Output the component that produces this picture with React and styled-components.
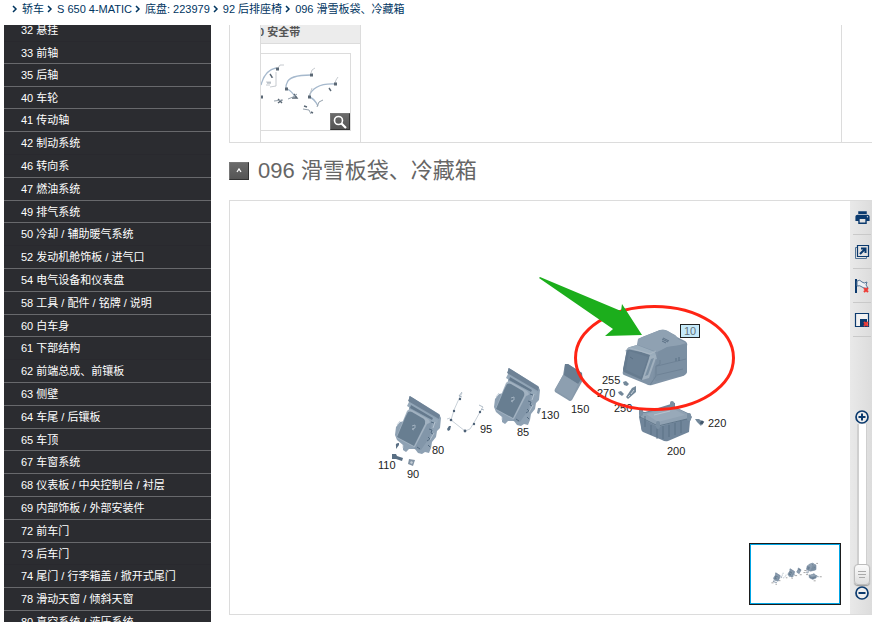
import * as React from 'react'
import styled, { createGlobalStyle } from 'styled-components'
import { MdPrint } from 'react-icons/md'

const GlobalStyle = createGlobalStyle`
  * {
    box-sizing: border-box;
  }

  body {
    margin: 0;
    background: #fff;
    color: #1a1a1a;
    font: 11px/16px "Liberation Sans", "Noto Sans CJK SC", sans-serif;
  }

  button {
    font: inherit;
    padding: 0;
    cursor: pointer;
  }
`

const Page = styled.div`
  display: flex;
  flex-direction: column;
  height: 100vh;
  overflow: hidden;
`

const Breadcrumb = styled.nav`
  flex: none;
  display: flex;
  align-items: center;
  gap: 3px;
  height: 25px;
  padding: 0 12px 8px;
  white-space: nowrap;
`

const Crumb = styled.a`
  display: flex;
  align-items: center;
  gap: 4px;
  color: #00355f;
  text-decoration: none;
`

const Columns = styled.div`
  flex: 1;
  display: flex;
  gap: 18px;
  min-height: 0;
  padding-left: 4px;
`

const Sidebar = styled.nav`
  flex: none;
  width: 207px;
  overflow: hidden;
  background: #2b2c30;
`

const GroupList = styled.ul`
  margin: -6px 0 0;
  padding: 0;
  list-style: none;
`

const GroupItem = styled.li`
  height: 23px;
  border-bottom: 1px solid ${(p) => (p.$plain ? '#29292e' : '#68696c')};

  &:nth-child(2),
  &:nth-child(5n + 4) {
    height: 22px;
  }
`

const GroupLink = styled.a`
  display: block;
  padding-left: 17px;
  color: #fff;
  line-height: 22px;
  text-decoration: none;
  white-space: nowrap;
`

const Main = styled.main`
  flex: 1;
  min-width: 0;
  overflow: hidden;
`

const Strip = styled.div`
  border: solid #dcdcdc;
  border-width: 0 0 1px 1px;
  padding: 0 30px;
`

const StripInner = styled.div`
  border-right: 1px solid #dcdcdc;
`

const Card = styled.section`
  width: 101px;
  overflow: hidden;
  border: solid #dcdcdc;
  border-width: 0 1px;
  padding-bottom: 11px;
`

const CardTitle = styled.h2`
  height: 19px;
  margin: 0 0 9px;
  border-bottom: 1px solid #dcdcdc;
  background: #ececec;
  color: #555;
  font-size: 11px;
  line-height: 14px;
  text-indent: -3px;
  white-space: nowrap;
`

const Thumb = styled.div`
  position: relative;
  height: 78px;
  margin-right: 9px;
  border: solid #dcdcdc;
  border-width: 1px 1px 1px 0;

  > svg {
    display: block;
  }
`

const darkButton = `
  display: flex;
  align-items: center;
  justify-content: center;
  border: 1px solid;
  border-color: #777 #333 #333 #777;
  border-radius: 0;
  background: linear-gradient(#6a6a6a, #555);
  color: #fff;
`

const ZoomButton = styled.button`
  ${darkButton}
  position: absolute;
  right: 0;
  bottom: 0;
  width: 20px;
  height: 17px;
`

const TitleRow = styled.div`
  display: flex;
  align-items: center;
  gap: 9px;
  height: 57px;
  padding-bottom: 2px;
`

const ToggleButton = styled.button`
  ${darkButton}
  width: 20px;
  height: 18px;
`

const Title = styled.h1`
  margin: 0;
  color: #666;
  font-size: 22px;
  font-weight: 400;
  line-height: 28px;
  white-space: nowrap;
`

const Panel = styled.section`
  display: flex;
  border: solid #dcdcdc;
  border-width: 1px 0 1px 1px;
`

const Canvas = styled.div`
  position: relative;
  flex: 1;
  min-width: 0;

  > svg {
    display: block;
    width: 100%;
    font: 11px "Liberation Sans", sans-serif;
  }
`

const Navigator = styled.div`
  position: absolute;
  right: 9px;
  bottom: 9px;
  width: 92px;
  height: 62px;
  border: 1px solid #1d1d1d;
  background: #fff;

  > svg {
    display: block;
    width: 100%;
    height: 100%;
    border: 1px solid #00a5e5;
  }
`

const Toolbar = styled.aside`
  flex: none;
  display: flex;
  flex-direction: column;
  width: 22px;
  background: linear-gradient(to right, #e9e9e9, #dcdcdc);
`

const ToolButton = styled.button`
  display: flex;
  align-items: center;
  justify-content: center;
  height: 34px;
  margin: 0 1px 0 3px;
  border: 0;
  border-bottom: 1px solid #c9c9c9;
  background: none;
  color: #0b3a6e;
`

const ZoomControl = styled.div`
  display: flex;
  flex-direction: column;
  align-items: center;
  margin-top: auto;
  padding: 0 0 14px 2px;
`

const RoundButton = styled.button`
  display: block;
  width: 14px;
  height: 14px;
  border: 0;
  background: none;

  svg {
    display: block;
  }
`

const ZoomSlider = styled.input`
  appearance: none;
  writing-mode: vertical-lr;
  direction: rtl;
  width: 16px;
  height: 162px;
  margin: 0;
  padding-bottom: 1px;
  background: linear-gradient(
    to right,
    transparent 3px,
    #cfcfcf 3px,
    #cfcfcf 5px,
    #fff 5px,
    #fff 12px,
    #cfcfcf 12px,
    #cfcfcf 13px,
    transparent 13px
  );

  &::-webkit-slider-thumb {
    appearance: none;
    width: 16px;
    height: 21px;
    border: 1px solid #bcbcbc;
    border-radius: 4px;
    background:
      linear-gradient(#aaa, #aaa) center 6px / 8px 1px no-repeat,
      linear-gradient(#aaa, #aaa) center 9px / 8px 1px no-repeat,
      linear-gradient(#aaa, #aaa) center 12px / 6px 1px no-repeat,
      linear-gradient(#fbfbfb, #dedede);
    box-shadow: 0 1px 1px #999;
  }
`

const crumbs = ['轿车', 'S 650 4-MATIC', '底盘: 223979', '92 后排座椅', '096 滑雪板袋、冷藏箱']

const groups = [
  { name: '32 悬挂', plain: true },
  { name: '33 前轴' },
  { name: '35 后轴' },
  { name: '40 车轮' },
  { name: '41 传动轴' },
  { name: '42 制动系统', plain: true },
  { name: '46 转向系' },
  { name: '47 燃油系统' },
  { name: '49 排气系统' },
  { name: '50 冷却 / 辅助暖气系统', plain: true },
  { name: '52 发动机舱饰板 / 进气口' },
  { name: '54 电气设备和仪表盘' },
  { name: '58 工具 / 配件 / 铭牌 / 说明' },
  { name: '60 白车身' },
  { name: '61 下部结构', plain: true },
  { name: '62 前端总成、前镶板' },
  { name: '63 侧壁' },
  { name: '64 车尾 / 后镶板' },
  { name: '65 车顶' },
  { name: '67 车窗系统' },
  { name: '68 仪表板 / 中央控制台 / 衬层' },
  { name: '69 内部饰板 / 外部安装件' },
  { name: '72 前车门' },
  { name: '73 后车门', plain: true },
  { name: '74 尾门 / 行李箱盖 / 掀开式尾门' },
  { name: '78 滑动天窗 / 倾斜天窗' },
  { name: '80 真空系统 / 液压系统' },
]

const labels = [
  [110, 378, 469],
  [90, 407, 478],
  [80, 432, 454],
  [95, 480, 433],
  [85, 517, 436],
  [130, 541, 419],
  [150, 571, 413],
  [255, 602, 384],
  [270, 597, 397],
  [250, 614, 412],
  [200, 667, 455],
  [220, 708, 427],
]

function Seat({ x = 0, y = 0 }) {
  return (
    <g transform={`translate(${x} ${y})`}>
      <path
        d="M409 396l4 2 26 16 2 4-1 10-3 3-1 6-4 5-1 6-2 5-4-1-3 2-4-1-3-4-6 0-3 3-3-2 0-5-6-5-2-5 1-8 4-5 5-1 4-9 0-5z"
        fill="#8ea1b3"
      />
      <path d="M410 396l30 19-1 4-31-18z" fill="#6e8296" />
      <path d="M409 402l29 18-1 4-30-18z" fill="#94a7b8" />
      <path d="M411 405l22 13-1 2-22-12z" fill="#64798d" />
      <path d="M407 411q2-3 5-1l16 9q3 2 1 6l-12 22q-2 1-5-1l-15-8q-1-2 1-5z" fill="#a2b2c1" />
      <path d="M408 412q2-1 4 0l12 7q2 2 1 5l-11 22-17-9 8-19z" fill="#687e91" />
      <path d="M427 424l5-2-2 15-9 13-7-1z" fill="#8296a9" />
      <path d="M412 426l3-1 0 3-3 1 2 1" fill="none" stroke="#a0b0bf" />
      <path d="M429 429l3 1-1 3 2 1m-5 3 2 2-3 2m-10 6 3 2m11-27 3 1m-4 24-2-2" fill="none" stroke="#536a80" />
      <path d="M435 422l-2 6m1 5-4 7m-27 5v3m-3-27-3 4" stroke="#bdc9d4" strokeWidth=".8" />
    </g>
  )
}

function Parts() {
  return (
    <g strokeLinejoin="round">
      <Seat />
      <Seat x={99} y={-28} />
      <g fill="#596f84">
        <path d="M396 446q-1-3 3-3l0 2-3 4z" />
        <path d="M392 454l4 0 1 2 6 2-1 3-6-2-4 0z" />
        <path d="M409 459l6 1-2 6-5-2z" fill="#8293a4" />
        <path d="M411 461l2 1-1 2-2-1z" fill="#c4cdd5" />
        <path d="M447 429l2-3 2 0-1 4-2 1z" />
        <path d="M538 408l3 0-2 6-2-1z" fill="#8093a5" />
      </g>
      <path
        d="M462 393l-4 8-4 9-3 10 14 11 5-2 5-8 5-9 3-5m-36 12 3-1"
        fill="none"
        stroke="#bac4ce"
        strokeWidth=".8"
      />
      <path d="M462 392l-3 4m3 1-3-1m20 9 4 2m-2 2 3 1" stroke="#8d9eae" strokeWidth=".7" />
      <g fill="#4e6277">
        <circle cx="460" cy="399" r="1.2" />
        <circle cx="454" cy="411" r="1.2" />
        <circle cx="451" cy="420" r="1.3" />
        <circle cx="465" cy="431" r="1.4" />
        <circle cx="474" cy="424" r="1.2" />
        <circle cx="480" cy="412" r="1.2" />
      </g>
      <path d="M565 364l3 0 14 9 1 7-11 20q-2 2-4 0l-13-8q-1-2 0-3l8-14z" fill="#8799aa" />
      <path d="M565 364l3 0 14 9 0 5-4 6-14-9z" fill="#687d91" />
      <path d="M563 375l15 9-7 16-16-10z" fill="#8d9fb0" />
      {/* cool box */}
      <path
        d="M627 349q1-2 3-2l7-2 1-6 4-2 18-7q4-1 7 1l8 4 2 2 8 4q3 2 2 5v24q0 4-4 6l-31 9q-3 1-6-1l-22-9q-2-1-1-4z"
        fill="#8093a6"
      />
      <path d="M638 339l22-9q5-1 8 1l8 5 2 3 8 4-9 3-9 1-11 5-19-7z" fill="#8fa1b2" />
      <path d="M658 352l9-5 20-3v28q-1 3-5 4l-26 5-3-3z" fill="#7b8fa2" />
      <path d="M637 345l18 7 2 7-4 1-28-9 5-4z" fill="#9badbc" />
      <path d="M627 349q12 2 23 6l-8 25-18-8q-1-1-1-3z" fill="#667b8f" />
      <path d="M629 351l19 6-7 20-15-7z" fill="#6c8195" />
      <path d="M650 356l6-1-1 6-6 17-7 2z" fill="#a0b0be" />
      <path d="M651 359l3-1-6 17-3 1z" fill="#7b90a3" />
      <path d="M627 350l3-2 20 6 6-3" fill="none" stroke="#adbac6" strokeWidth=".8" />
      <path d="M660 360v4l-4 2v10l-6 9M657 366l29-7m-29 16 26-6" fill="none" stroke="#687d91" strokeWidth=".7" />
      <path d="M662 339l6 3m-5-4 6 3m-7 0 4 2m10 15 0 3m3-4v4m-49-4 3 2" stroke="#5b7085" />
      {/* container */}
      <path
        d="M640 411l5 1 26-8 1-2 3 1 0 4 15 7 2 3-2 4-1 11-21 9q-3 1-6-1l-19-8q-2-1-2-5l-2-10z"
        fill="#70859a"
      />
      <path d="M641 413l4 0 28-7 17 9 0 3-32 9-17-9z" fill="#8fa1b2" />
      <path d="M646 414l26-6 13 7-27 7z" fill="#98a9b9" />
      <path
        d="M640 417l18 9 33-8m-40 7v10m6-8v12m6-13v13m6-14v12m6-14v12m6-14v12m-36-17v11"
        fill="none"
        stroke="#576d82"
        strokeWidth=".8"
      />
      <path d="M654 415l16-4" stroke="#bac6d0" strokeWidth=".9" />
      <path d="M641 410v4m17 9v4m31-12v4m-17-16v4" stroke="#7a8fa2" strokeWidth="4" strokeLinecap="round" />
      <g fill="#73889a">
        <path d="M623 382l3-1 3 3-2 2-3-1z" />
        <path d="M618 392l3-1 3 3-2 2-3-2z" />
        <path d="M632 388l4-2v6l-8 7-2-2z" />
        <path d="M695 419l4 0 4 3-2 4-4-4z" />
      </g>
      <path d="M631 394l3-4m-6 7 2-2" stroke="#cad3da" />
      <path d="M701 424l2-3" stroke="#43586d" strokeWidth="3" />
    </g>
  )
}

function Diagram() {
  return (
    <svg viewBox="230 201 620 413" role="img" aria-label="096 滑雪板袋、冷藏箱">
      <Parts />
      <g fill="#222">
        {labels.map(([n, x, y]) => (
          <text key={n} x={x} y={y}>
            {n}
          </text>
        ))}
      </g>
      <rect x="680.5" y="324.5" width="19" height="13" fill="#c5eafa" stroke="#222" />
      <text x="684" y="335" fill="#66727a">
        10
      </text>
      <ellipse cx="654.5" cy="358" rx="79" ry="51.5" fill="none" stroke="#ff2414" strokeWidth="3" />
      <path d="M540 277l81 34 1-7 20 31-37 1 8-7-74-51z" fill="#1cae1c" />
    </svg>
  )
}

function BeltThumb() {
  return (
    <svg width="89" height="76" viewBox="261 54 89 76" fill="none" aria-hidden="true">
      <path
        d="M261 85q4-15 15-17M311 75q-22 0-24 8-2 4 0 6 5 2 8 8M335 84q-22-1-26 13 5 1 9 9"
        stroke="#a6b9cd"
        strokeWidth="1.3"
      />
      <path
        d="M278 68l2-3 4 0M311 73l1-3 3-2M335 83l1-3 2-3M309 97l3-9M276 72v14l-6 1m-4-5h5m-5 3h4"
        stroke="#b7bdc3"
        strokeWidth=".8"
      />
      <g stroke="#5b6875" strokeWidth="1.4">
        <path d="M276 69h3m31 6h3m21 9h3m-52 5h3m20 8h3m-50 0h2" strokeWidth="3" />
        <path d="M270 74l2 3-1 0M278 99l4 4m-4 0 4-3M292 98l5 0-3-4M304 106l3 1m4 5 2 1M329 88l2 3" />
      </g>
      <path d="M274 101l9-1m5-1 5-2 4-3m6 15 6 1 2 4m6-7 2-5 4-2M267 83h4" stroke="#95a1ac" />
    </svg>
  )
}

function PopOutIcon() {
  return (
    <svg width="16" height="16" viewBox="0 0 16 16" fill="none" stroke="currentColor" aria-hidden="true">
      <path d="M3.5 3.5h-2v11h11v-2" stroke="#557596" />
      <path d="M3.5 1.5h11v11h-11z" strokeWidth="1.2" />
      <path d="M6 10l5-5M7 4.5h4.5V9" strokeWidth="2" />
    </svg>
  )
}

function FlagIcon() {
  return (
    <svg width="16" height="16" viewBox="0 0 16 16" fill="none" aria-hidden="true">
      <path d="M2 1v14" stroke="currentColor" strokeWidth="2" />
      <path d="M3 3q3-2 5 1 2 2 5 0l-1 3 2 3q-4 1-6-1-2-2-5-1z" fill="#eef1f4" stroke="#557596" />
      <path d="M10 10l4 4m0-4-4 4" stroke="#ee3b35" strokeWidth="2" />
    </svg>
  )
}

function HideMapIcon() {
  return (
    <svg width="16" height="16" viewBox="0 0 16 16" fill="none" aria-hidden="true">
      <path d="M1.5 1.5h13v13h-13z" fill="#f2f2f2" stroke="currentColor" strokeWidth="1.2" />
      <path d="M6 7h7v7H6z" fill="currentColor" />
      <path d="M10 10l4 4m0-4-4 4" stroke="#ee3b35" strokeWidth="2" />
    </svg>
  )
}

function RoundIcon({ plus }) {
  return (
    <svg width="14" height="14" viewBox="0 0 14 14" fill="none" stroke="#0b3a6e" aria-hidden="true">
      <circle cx="7" cy="7" r="6" fill="#eee" strokeWidth="1.7" />
      <path d={plus ? 'M3.5 7h7M7 3.5v7' : 'M3.5 7h7'} strokeWidth="2" />
    </svg>
  )
}

export default function App() {
  const [zoom, setZoom] = React.useState(0)
  const step = (n) => setZoom(Math.min(100, Math.max(0, zoom + n)))

  return (
    <Page>
      <GlobalStyle />
      <Breadcrumb>
        {crumbs.map((name) => (
          <Crumb key={name} href="#">
            <svg width="6" height="8" viewBox="0 0 6 8" fill="none" stroke="#00355f" strokeWidth="1.5" aria-hidden="true">
              <path d="M1 1l3 3-3 3" />
            </svg>
            {name}
          </Crumb>
        ))}
      </Breadcrumb>
      <Columns>
        <Sidebar>
          <GroupList>
            {groups.map((group) => (
              <GroupItem key={group.name} $plain={group.plain}>
                <GroupLink href="#">{group.name}</GroupLink>
              </GroupItem>
            ))}
          </GroupList>
        </Sidebar>
        <Main>
          <Strip>
            <StripInner>
              <Card>
                <CardTitle>0 安全带</CardTitle>
                <Thumb>
                  <BeltThumb />
                  <ZoomButton aria-label="放大">
                    <svg width="14" height="14" viewBox="0 0 14 14" fill="none" stroke="#fff" aria-hidden="true">
                      <circle cx="5.5" cy="5.5" r="4" strokeWidth="1.6" />
                      <path d="M8.5 8.5l4.5 4.5" strokeWidth="2.2" />
                    </svg>
                  </ZoomButton>
                </Thumb>
              </Card>
            </StripInner>
          </Strip>
          <TitleRow>
            <ToggleButton aria-label="收起">
              <svg width="6" height="5" viewBox="0 0 6 5" fill="none" stroke="#fff" strokeWidth="1.3" aria-hidden="true">
                <path d="M1 4l2-3 2 3" />
              </svg>
            </ToggleButton>
            <Title>096 滑雪板袋、冷藏箱</Title>
          </TitleRow>
          <Panel>
            <Canvas>
              <Diagram />
              <Navigator>
                <svg viewBox="239 204 607 400" aria-hidden="true">
                  <g stroke="#8b9cad" strokeWidth="3">
                    <Parts />
                  </g>
                  <path
                    d="M380 465h14m14 10h10m14-25h10m38-20h10m28 3h10m15-18h14m18-6h14m18-29h14m-20 14h14m4 14h14m38 43h14m28-28h14m-38-92h12"
                    stroke="#999"
                    strokeWidth="6"
                  />
                </svg>
              </Navigator>
            </Canvas>
            <Toolbar>
              <ToolButton aria-label="打印">
                <MdPrint size={17} />
              </ToolButton>
              <ToolButton aria-label="新窗口">
                <PopOutIcon />
              </ToolButton>
              <ToolButton aria-label="清除标记">
                <FlagIcon />
              </ToolButton>
              <ToolButton aria-label="隐藏导航图">
                <HideMapIcon />
              </ToolButton>
              <ZoomControl>
                <RoundButton aria-label="放大图" onClick={() => step(10)}>
                  <RoundIcon plus />
                </RoundButton>
                <ZoomSlider
                  type="range"
                  aria-label="缩放"
                  value={zoom}
                  onChange={(e) => setZoom(Number(e.target.value))}
                />
                <RoundButton aria-label="缩小图" onClick={() => step(-10)}>
                  <RoundIcon />
                </RoundButton>
              </ZoomControl>
            </Toolbar>
          </Panel>
        </Main>
      </Columns>
    </Page>
  )
}
